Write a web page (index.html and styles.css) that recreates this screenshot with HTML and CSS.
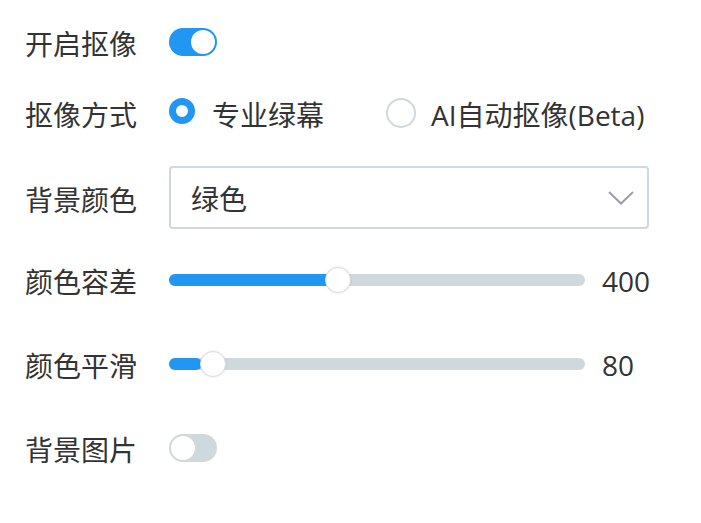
FILE: index.html
```html
<!DOCTYPE html>
<html lang="zh-CN">
<head>
<meta charset="utf-8">
<title>抠像设置</title>
<link rel="stylesheet" href="styles.css">
</head>
<body>
<div class="form">
  <div class="row row-1">
    <div class="label">开启抠像</div>
    <div class="switch on"><span class="knob"></span></div>
  </div>
  <div class="row row-2">
    <div class="label">抠像方式</div>
    <div class="radio-group">
      <label class="option"><span class="radio checked"></span><span class="opt-text">专业绿幕</span></label>
      <label class="option option-2"><span class="radio"></span><span class="opt-text">AI自动抠像(Beta)</span></label>
    </div>
  </div>
  <div class="row row-3">
    <div class="label">背景颜色</div>
    <div class="select">
      <span class="select-text">绿色</span>
      <svg class="chevron" width="26" height="14" viewBox="0 0 26 14"><polyline points="1,1 13,12.5 25,1" fill="none" stroke="#9e9eab" stroke-width="2"/></svg>
    </div>
  </div>
  <div class="row row-4">
    <div class="label">颜色容差</div>
    <div class="slider">
      <div class="track">
        <div class="fill" style="width:40%"></div>
        <div class="thumb" style="left:calc((100% - 26px) * 0.4)"></div>
      </div>
    </div>
    <div class="value">400</div>
  </div>
  <div class="row row-5">
    <div class="label">颜色平滑</div>
    <div class="slider">
      <div class="track">
        <div class="fill" style="width:8%"></div>
        <div class="thumb" style="left:calc((100% - 26px) * 0.08)"></div>
      </div>
    </div>
    <div class="value">80</div>
  </div>
  <div class="row row-6">
    <div class="label">背景图片</div>
    <div class="switch off"><span class="knob"></span></div>
  </div>
</div>
</body>
</html>
```
FILE: styles.css
```css
* { box-sizing: border-box; }
html, body { margin: 0; padding: 0; background: #fff; }
body {
  font-family: "Open Sans", "Noto Sans CJK SC", sans-serif;
  font-size: 28px;
  color: #333;
}
.form {
  display: grid;
  grid-template-rows: 55px 88px 81px 84px 84px 84px;
  padding: 14px 0 0 25px;
  width: 701px;
}
.row {
  display: flex;
  align-items: center;
}
.label {
  width: 144px;
  flex: none;
  line-height: 40px;
  padding-top: 4px;
}
.switch {
  position: relative;
  width: 48px;
  height: 28px;
  border-radius: 14px;
  flex: none;
}
.switch.on { background: #2196f3; }
.switch.off { background: #cfd8dc; }
.switch .knob {
  position: absolute;
  top: 2px;
  width: 24px;
  height: 24px;
  border-radius: 50%;
  background: #fff;
}
.switch.on .knob { right: 2px; }
.switch.off .knob { left: 2px; }
.radio-group {
  display: flex;
  align-items: center;
}
.option {
  display: flex;
  align-items: center;
}
.option-2 { margin-left: 62px; }
.radio {
  flex: none;
  width: 30px;
  height: 30px;
  border-radius: 50%;
  border: 2px solid #cfd8dc;
  margin-right: 15px;
}
.radio.checked {
  width: 26px;
  height: 26px;
  border: 7px solid #2196f3;
  margin-right: 17px;
  margin-bottom: 4px;
}
.opt-text {
  line-height: 40px;
  padding-top: 4px;
}
.select {
  width: 480px;
  height: 63px;
  border: 2px solid #cfd8dc;
  border-radius: 4px;
  display: flex;
  align-items: center;
  justify-content: space-between;
  padding: 0 13px 0 20px;
}
.select-text { line-height: 40px; padding-top: 2px; }
.chevron { display: block; }
.slider {
  width: 416px;
  flex: none;
}
.track {
  position: relative;
  height: 12px;
  border-radius: 6px;
  background: #cfd8dc;
}
.fill {
  height: 100%;
  border-radius: 6px;
  background: #2196f3;
}
.thumb {
  position: absolute;
  top: -7px;
  width: 26px;
  height: 26px;
  border-radius: 50%;
  background: #fff;
  border: 1px solid #dcdcdc;
  box-shadow: 0 0 2px rgba(0, 0, 0, 0.12);
}
.value {
  margin-left: 17px;
  line-height: 40px;
  padding-top: 2px;
}
```
